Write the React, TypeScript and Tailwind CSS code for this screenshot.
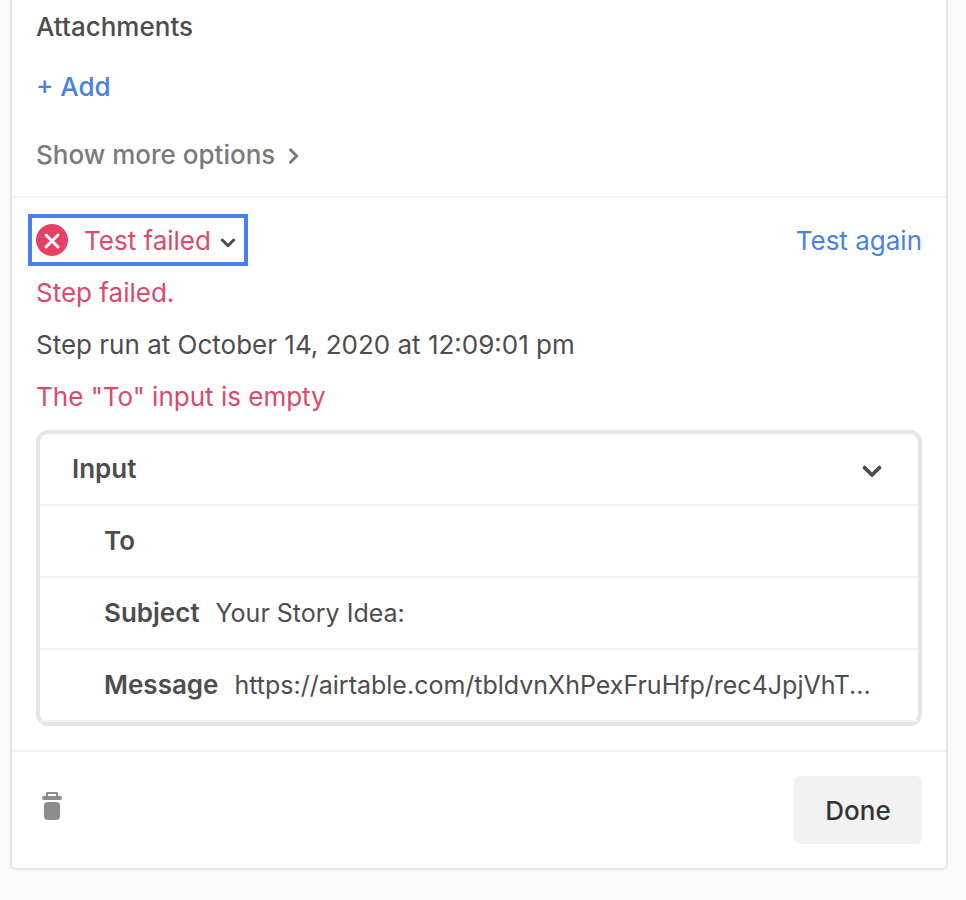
const fields = [
  { label: "To", value: "" },
  { label: "Subject", value: "Your Story Idea:" },
  {
    label: "Message",
    value: "https://airtable.com/tbldvnXhPexFruHfp/rec4JpjVhT...",
  },
];

function ErrorIcon() {
  return (
    <svg className="size-8 shrink-0" viewBox="0 0 32 32" aria-hidden="true">
      <circle cx="16" cy="16" r="16" fill="#e54066" />
      <path
        d="M10 11 L22 23 M22 11 L10 23"
        stroke="#fff"
        strokeWidth="3"
        strokeLinecap="round"
      />
    </svg>
  );
}

function Chevron({ className }: { className: string }) {
  return (
    <svg
      className={className}
      viewBox="0 0 20 13"
      fill="none"
      stroke="currentColor"
      strokeWidth="3.8"
      strokeLinecap="round"
      strokeLinejoin="round"
      aria-hidden="true"
    >
      <path d="M2.6 2.6 L10 10 L17.4 2.6" />
    </svg>
  );
}

function TrashIcon() {
  return (
    <svg className="h-7 w-5" viewBox="0 0 20 28" fill="#8c8c8c" aria-hidden="true">
      <path
        d="M4 4V1.2Q4 0 5.2 0H14.8Q16 0 16 1.2V4H18Q20 4 20 6Q20 8 18 8H2Q0 8 0 6Q0 4 2 4ZM6 2V4H14V2Z"
        fillRule="evenodd"
      />
      <rect x="2" y="10" width="16" height="18" rx="4" />
    </svg>
  );
}

export default function App() {
  return (
    <div className="min-h-screen bg-[#fafafa] pr-[18px] pb-[30px] pl-[10px] font-['Inter','Liberation_Sans',sans-serif] text-[26px] leading-8 text-[#4d4d4d]">
      <main className="rounded-b-md border-x-2 border-b-2 border-[#e5e5e5] bg-white">
        <section className="flex flex-col items-start px-6 pt-[11px] pb-[25px] font-medium">
          <h2>Attachments</h2>
          <button className="mt-7 text-[#4a7fe8]">+ Add</button>
          <button className="mt-9 flex items-center gap-3 text-[#7a7a7a]">
            Show more options
            <svg
              className="mt-px h-4 w-3"
              viewBox="0 0 12 16"
              fill="none"
              stroke="currentColor"
              strokeWidth="3"
              strokeLinecap="round"
              strokeLinejoin="round"
              aria-hidden="true"
            >
              <path d="M3.5 1.8 L9.7 8 L3.5 14.2" />
            </svg>
          </button>
        </section>

        <section className="border-t-2 border-[#f2f2f2] px-6 pt-4 pb-6">
          <div className="flex items-center justify-between leading-[34px]">
            <button className="-ml-2 flex h-[52px] items-center border-4 border-[#4680ee] px-1 text-[#d94a6b]">
              <ErrorIcon />
              <span className="ml-4 pt-0.5">Test failed</span>
              <Chevron className="mt-1.5 mr-1 ml-[9px] h-[10px] w-4 text-[#4d4d4d]" />
            </button>
            <button className="pt-0.5 text-[#4a7fe8]">Test again</button>
          </div>
          <div className="pt-px leading-[52px]">
            <p className="text-[#d94a6b]">Step failed.</p>
            <p>Step run at October 14, 2020 at 12:09:01 pm</p>
            <p className="text-[#d94a6b]">The "To" input is empty</p>
          </div>

          <div className="mt-[7px] rounded-xl border-4 border-[#e5e5e5]">
            <button className="flex h-[72px] w-full items-center justify-between border-b-2 border-[#f2f2f2] pr-9 pl-8 font-semibold">
              Input
              <Chevron className="mt-1 h-[13px] w-5" />
            </button>
            <dl>
              {fields.map((field) => (
                <div
                  key={field.label}
                  className="flex h-[72px] items-center gap-4 border-b-2 border-[#f2f2f2] pr-8 pl-16"
                >
                  <dt className="font-semibold">{field.label}</dt>
                  <dd className="min-w-0 truncate text-[25px]">{field.value}</dd>
                </div>
              ))}
            </dl>
          </div>
        </section>

        <footer className="flex items-start justify-between border-t-2 border-[#f2f2f2] p-6">
          <button className="mt-4 ml-[6px]" aria-label="Delete step">
            <TrashIcon />
          </button>
          <button className="h-[68px] w-32 rounded-md bg-[#f2f2f2] pt-0.5 font-medium text-[#333333]">
            Done
          </button>
        </footer>
      </main>
    </div>
  );
}
